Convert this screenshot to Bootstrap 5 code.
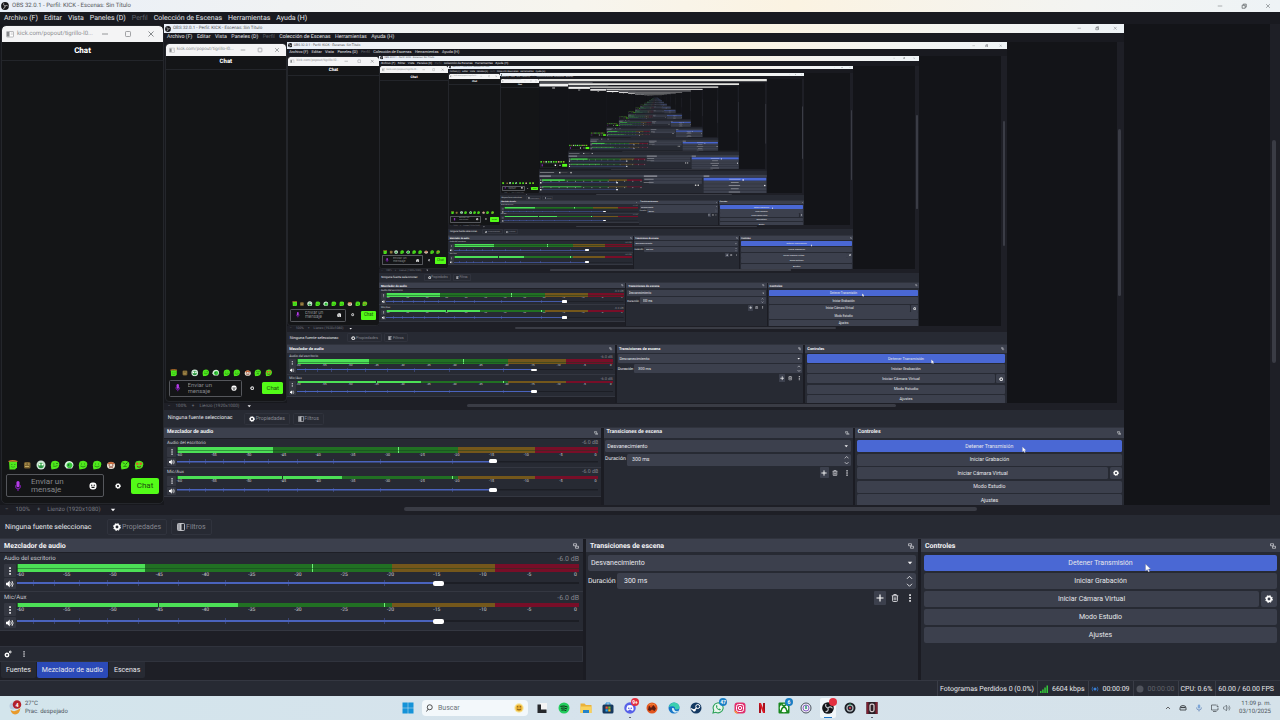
<!DOCTYPE html>
<html lang="es">
<head>
<meta charset="utf-8">
<meta name="viewport" content="width=device-width, initial-scale=1">
<title>OBS 32.0.1 - Perfil: KICK - Escenas: Sin Título</title>
<link rel="stylesheet" href="https://cdn.jsdelivr.net/npm/bootstrap@5.3.0/dist/css/bootstrap.min.css">
<style>
  :root { --s: 1; }
  body { background: #1e1f26; font-family: Roboto, "Open Sans", sans-serif; overflow-x: hidden; }
  /* Every desktop copy has its own scale; --u is one screen unit at that scale */
  .desk {
    --u: calc(1px * var(--s));
    --fs: calc(7 * var(--u));
    font-size: var(--fs); line-height: calc(10 * var(--u)); color: #e8e9ed;
    background: #1e1f26; text-rendering: geometricPrecision; min-width: 0;
  }
  .desk button, .desk input, .desk select, .desk textarea { font: inherit; color: inherit; margin: 0; padding: 0; border: 0; background: none; border-radius: 0; min-width: 0; line-height: inherit; }
  .desk a { color: inherit; text-decoration: none; white-space: nowrap; }
  .desk svg { display: block; flex: none; }
  .i6 { width: calc(6 * var(--u)); height: calc(6 * var(--u)); }
  .i8 { width: calc(8 * var(--u)); height: calc(8 * var(--u)); }
  .i10 { width: calc(10 * var(--u)); height: calc(10 * var(--u)); }

  .titlebar { height: calc(12 * var(--u)); background: linear-gradient(90deg, #e9eff8, #f7f5ee 45%, #fbf3e2 62%, #f3f4f2 85%, #eef3f6); color: #55585c; padding: 0 calc(9 * var(--u)) 0 calc(1 * var(--u)); gap: calc(3 * var(--u)); font-size: calc(6 * var(--u)); white-space: nowrap; overflow: hidden; }
  .winbtns { gap: calc(18 * var(--u)); }
  .menubar { height: calc(12 * var(--u)); background: #191a20; padding: 0 calc(4 * var(--u)); gap: calc(6 * var(--u)); }
  .dim { color: #62646c !important; }

  .preview { aspect-ratio: 1280 / 481; background: #131418; overflow: hidden; min-height: 0; }
  .chatslot { width: 12.8125%; padding: calc(2 * var(--u)) calc(1 * var(--u)) 0 calc(2 * var(--u)); background: #17181d; }
  .mirror { width: 75%; }
  .mirror > svg { width: 100%; }
  .vtrack { width: calc(10 * var(--u)); background: #1e1f26; padding: calc(116 * var(--u)) calc(4 * var(--u)) 0 calc(2 * var(--u)); }
  .vthumb { height: calc(223 * var(--u)); background: #3a3c45; border-radius: calc(2 * var(--u)); }

  .chatwin { height: calc(477 * var(--u)); background: #141517; border-radius: calc(4 * var(--u)); outline: calc(1 * var(--u)) solid #24262b; overflow: hidden; }
  .chatbar { height: calc(16 * var(--u)); background: #f4f4f5; color: #8b8d90; padding: 0 calc(8 * var(--u)) 0 calc(4 * var(--u)); gap: calc(3 * var(--u)); font-size: calc(6 * var(--u)); }
  .chatbtns { width: calc(54 * var(--u)); }
  .chathead { height: calc(19 * var(--u)); font-weight: 800; font-size: calc(8 * var(--u)); color: #fff; border-bottom: calc(1 * var(--u)) solid #23252a; }
  .emotes { gap: calc(4 * var(--u)); padding: 0 calc(6 * var(--u)); margin-bottom: calc(4 * var(--u)); }
  .chatrow { padding: 0 calc(4 * var(--u)) calc(6 * var(--u)); gap: calc(5 * var(--u)); }
  .msgbox { width: calc(98 * var(--u)); height: calc(23 * var(--u)); border: calc(1 * var(--u)) solid #55575c; border-radius: calc(2 * var(--u)); padding: 0 calc(6 * var(--u)); gap: calc(8 * var(--u)); }
  .desk .msgbox textarea { height: calc(16 * var(--u)); font-size: calc(8 * var(--u)); line-height: calc(8 * var(--u)); resize: none; overflow: hidden; width: calc(50 * var(--u)); }
  .msgbox textarea::placeholder { color: #85878b; opacity: 1; }
  .desk .sendbtn { width: calc(28 * var(--u)); height: calc(16 * var(--u)); background: #53fc18; color: #1b4d0d; border-radius: calc(2 * var(--u)); font-size: calc(8 * var(--u)); }

  .zoomrow { height: calc(10 * var(--u)); color: #777a82; font-size: calc(6 * var(--u)); padding-left: calc(5 * var(--u)); gap: calc(7 * var(--u)); }
  .zoomsel { width: calc(56 * var(--u)); }
  .hthumb { position: absolute; left: 31.6%; width: 44.7%; top: calc(2 * var(--u)); height: calc(4 * var(--u)); border-radius: calc(2 * var(--u)); background: #3a3c45; }
  .srcbar { height: calc(24 * var(--u)); background: #272a33; padding: 0 calc(5 * var(--u)); border-bottom: calc(1 * var(--u)) solid #30333d; }
  .srcname { width: calc(82 * var(--u)); white-space: nowrap; margin-right: calc(20 * var(--u)); }
  .desk .srcbtn { height: calc(16 * var(--u)); border: calc(1 * var(--u)) solid #30333d; border-radius: calc(2 * var(--u)); padding: 0 calc(5 * var(--u)); margin-right: calc(4 * var(--u)); gap: calc(1 * var(--u)); color: #858790; }

  .docks { gap: calc(3 * var(--u)); height: calc(141 * var(--u)); background: #1b1c23; }
  .dockcol { min-width: 0; background: #272a33; }
  .d1 { flex: 583 1 0; background: #1e1f26; } .d2 { flex: 332 1 0; } .d3 { flex: 359 1 0; }
  .dockhead { height: calc(13 * var(--u)); margin-bottom: calc(1 * var(--u)); background: #3c404d; font-weight: 700; padding: 0 calc(4 * var(--u)); color: #f3f3f6; }
  .track { height: calc(39 * var(--u)); background: #272a33; border-bottom: calc(1 * var(--u)) solid #343741; padding: calc(1 * var(--u)) calc(4 * var(--u)) 0; }
  .trackname { font-size: calc(6 * var(--u)); line-height: calc(10 * var(--u)); color: #c9cbd1; }
  .db { color: #858790; font-size: calc(7 * var(--u)); }
  .trackicons { width: calc(12 * var(--u)); margin-right: calc(1 * var(--u)); }
  .desk .tbtn { background: #343741; height: calc(13 * var(--u)); border-radius: calc(1 * var(--u)); }
  .desk .tbtn + .tbtn { height: calc(11 * var(--u)); margin-top: calc(1 * var(--u)); }
  .meter { position: relative; height: calc(8 * var(--u)); background: linear-gradient(90deg, #217023 0 66.7%, #74571b 66.7% 85%, #780e28 85%); }
  .meter.thin { height: calc(4 * var(--u)); }
  .lit { height: 100%; background: #4ce056; border-left: calc(1 * var(--u)) solid #217023; }
  .meter:not(.thin)::after { content: ""; position: absolute; left: 0; right: 0; top: 50%; height: calc(1 * var(--u)); background: rgba(20, 60, 30, .45); }
  .peak { position: absolute; top: 0; bottom: 0; width: calc(1 * var(--u)); background: #6cf077; }
  .notch { position: absolute; top: 0; bottom: 0; width: calc(1 * var(--u)); background: #173d1e; }
  .scale { font-size: calc(5 * var(--u)); line-height: calc(6 * var(--u)); color: #d4d5da; }
  .scale span { width: calc(7 * var(--u)); text-align: center; white-space: nowrap; display: block; }
  .fader { position: relative; height: calc(8 * var(--u)); margin-top: calc(1 * var(--u)); }
  .thin ~ .fader { margin-top: calc(4 * var(--u)); }
  .desk .fader input { -webkit-appearance: none; appearance: none; position: relative; display: block; width: 100%; height: calc(8 * var(--u)); background: linear-gradient(90deg, #4a63bd 75%, #1c1e25 75%) center / 100% calc(2 * var(--u)) no-repeat; }
  .fader input::-webkit-slider-thumb { -webkit-appearance: none; width: calc(11 * var(--u)); height: calc(5 * var(--u)); border: 0; border-radius: calc(2 * var(--u)); background: #fff; }
  .fader i { position: absolute; top: calc(1 * var(--u)); bottom: calc(1 * var(--u)); width: calc(1 * var(--u)); background: #3a4370; }
  .mixtools { height: calc(16 * var(--u)); background: #272a33; border: calc(1 * var(--u)) solid #30333d; border-left: 0; padding: 0 calc(4 * var(--u)); gap: calc(9 * var(--u)); margin-top: calc(15 * var(--u)); }
  .tabrow { gap: calc(1 * var(--u)); padding-left: calc(1 * var(--u)); }
  .desk .tabbtn { height: calc(16 * var(--u)); background: #272a33; padding: 0 calc(5 * var(--u)); border-radius: 0 0 calc(2 * var(--u)) calc(2 * var(--u)); }
  .desk .tabbtn.on { background: #2b4ab8; }

  .dockbody { padding: calc(2 * var(--u)) calc(2 * var(--u)); gap: calc(2 * var(--u)); }
  .d3 .dockbody { padding: calc(2 * var(--u)) calc(3 * var(--u)); }
  .pairgap { gap: calc(2 * var(--u)); }
  .field { height: calc(16 * var(--u)); background: #3c404d; border-radius: calc(2 * var(--u)); position: relative; }
  .desk .field select { -webkit-appearance: none; appearance: none; width: 100%; height: 100%; padding-left: calc(3 * var(--u)); }
  .field > svg { position: absolute; right: calc(3 * var(--u)); top: calc(5 * var(--u)); }
  .desk .field input { width: 100%; padding-left: calc(7 * var(--u)); }
  .field > svg.spin { top: 0; width: calc(7 * var(--u)); height: calc(16 * var(--u)); }
  .durlabel { width: calc(29 * var(--u)); }
  .tools { gap: calc(3 * var(--u)); }
  .desk .toolbtn { width: calc(12 * var(--u)); height: calc(14 * var(--u)); border-radius: calc(1 * var(--u)); }
  .desk .toolbtn.on { background: #3c404d; }
  .desk .ctl { height: calc(16 * var(--u)); background: #3c404d; border-radius: calc(2 * var(--u)); position: relative; color: #e6e7eb; }
  .desk .ctl.live { background: #4a68d4; }
  .desk .gearbtn { width: calc(16 * var(--u)); }
  .pointer { position: absolute; left: 62.5%; top: calc(8 * var(--u)); width: calc(6 * var(--u)); height: calc(10 * var(--u)); z-index: 2; }

  .statusbar { height: calc(16 * var(--u)); background: #272a33; border-top: calc(1 * var(--u)) solid #343741; white-space: nowrap; padding-right: calc(3 * var(--u)); }
  .statusbar > div { border-left: calc(1 * var(--u)) solid #3a3d47; padding: 0 calc(3 * var(--u)) 0 calc(2 * var(--u)); gap: calc(4 * var(--u)); height: 100%; }
  .taskbar { position: relative; height: calc(24 * var(--u)); background: linear-gradient(90deg, #d3e5ec, #d6e3ec 40%, #d5e2ea); color: #4d565d; font-size: calc(6 * var(--u)); line-height: calc(8 * var(--u)); padding: 0 calc(9 * var(--u)) 0 calc(9 * var(--u)); }
  .tasks { position: absolute; left: 0; right: 0; top: 0; bottom: 0; gap: calc(6 * var(--u)); pointer-events: none; }
  .tasks > * { pointer-events: auto; }
  .weather { width: 13px; height: 16px; margin-right: 3px; }
  .tray { gap: 8px; }
  .tasks button svg { width: calc(12 * var(--u)); height: calc(12 * var(--u)); margin: auto; }
  .searchbox { width: calc(106 * var(--u)); height: calc(16 * var(--u)); border-radius: calc(4 * var(--u)); background: #f3f8fb; padding: 0 calc(4 * var(--u)); gap: calc(4 * var(--u)); }
  .searchbox input { width: 100%; }
  .desk .searchbox input { font-size: calc(7 * var(--u)); }
  .desk .searchbox input::placeholder { color: #6a7278; opacity: 1; }
  .desk .app { position: relative; width: calc(16 * var(--u)); height: calc(20 * var(--u)); border-radius: calc(2 * var(--u)); }
  .desk .app.on { background: #f2f7fa; }
  .app b { position: absolute; top: 0; right: calc(-1 * var(--u)); width: calc(8 * var(--u)); height: calc(8 * var(--u)); line-height: calc(8 * var(--u)); border-radius: 50%; font-size: calc(5 * var(--u)); color: #fff; text-align: center; }
  .bred { background: #e3303f; } .bblue { background: #1b7fc4; }
  .app.run::after { content: ""; position: absolute; bottom: 0; left: 50%; width: calc(2 * var(--u)); height: calc(1 * var(--u)); margin-left: calc(-1 * var(--u)); background: #667; }
  .app.on::after { content: ""; position: absolute; bottom: 0; left: 25%; width: 50%; height: calc(1 * var(--u)); background: #1f77c8; }
</style>
</head>
<body>
<svg class="d-none" aria-hidden="true">
  <symbol id="i-obs" viewBox="0 0 16 16"><circle cx="8" cy="8" r="7.800" fill="#17171a"/><g fill="none" stroke="#c9c9ce" stroke-width="1.500" stroke-linecap="round"><path d="M5.200 3.200a3.100 3.100 0 0 0 2.300 4.600"/><path d="M5.200 3.200a3.100 3.100 0 0 0 2.300 4.600" transform="rotate(120 8 8)"/><path d="M5.200 3.200a3.100 3.100 0 0 0 2.300 4.600" transform="rotate(240 8 8)"/></g></symbol>
  <symbol id="i-min" viewBox="0 0 8 8"><path d="M1 4h6" stroke="#8b8d90" stroke-width=".9"/></symbol>
  <symbol id="i-max" viewBox="0 0 8 8"><rect x="1.500" y="1.500" width="5" height="5" rx=".8" fill="none" stroke="#8b8d90" stroke-width=".8"/></symbol>
  <symbol id="i-rest" viewBox="0 0 8 8"><path d="M1.500 3h4v4h-4zM3 3V1.500h4v4H5.500" fill="none" stroke="#4f5357" stroke-width=".9"/></symbol>
  <symbol id="i-x" viewBox="0 0 8 8"><path d="M1.500 1.500l5 5m0-5l-5 5" stroke="#6c7074" stroke-width=".8"/></symbol>
  <symbol id="i-pop" viewBox="0 0 16 16"><rect x="1" y="3" width="14" height="11" rx="1" fill="#fff" stroke="#a4a6a9" stroke-width="1.500"/><rect x="2" y="4" width="5" height="9" fill="#86888b"/><path d="M9.500 6h4M9.500 8.500h4" stroke="#a4a6a9"/></symbol>
  <symbol id="i-mic" viewBox="0 0 10 16"><rect x="2.500" y="0" width="5" height="10" rx="2.500" fill="#b43be8"/><path d="M1 7v1.500a4 4 0 0 0 8 0V7M5 12.500V16" fill="none" stroke="#8a1fc0" stroke-width="1.600"/></symbol>
  <symbol id="i-smile" viewBox="0 0 16 16"><rect x="1" y="1" width="14" height="14" rx="6" fill="#fff"/><circle cx="5.500" cy="6.500" r="1.300" fill="#141517"/><circle cx="10.500" cy="6.500" r="1.300" fill="#141517"/><path d="M4 9.500h8c-.6 3.400-7.400 3.400-8 0z" fill="#141517"/></symbol>
  <symbol id="i-gear" viewBox="0 0 16 16"><circle cx="8" cy="8" r="4.600" fill="none" stroke="#fff" stroke-width="3.400"/><circle cx="8" cy="8" r="6.600" fill="none" stroke="#fff" stroke-width="2.200" stroke-dasharray="3 2.180"/></symbol>
  <symbol id="i-filter" viewBox="0 0 16 16"><rect x="1" y="1" width="14" height="14" rx="1.500" fill="none" stroke="#d8d9de" stroke-width="1.600"/><path d="M2 2h6v12H2z" fill="#a2a4ab"/><path d="M8 1v14" stroke="#fff" stroke-width="1.500"/></symbol>
  <symbol id="i-down" viewBox="0 0 12 12"><path d="M1.500 3.500h9L6 8.500z" fill="#f2f2f5"/></symbol>
  <symbol id="i-float" viewBox="0 0 12 12"><path d="M1 1.500h6v4H1zM5 6.500h6v4H5z" fill="none" stroke="#d5d6db" stroke-width="1.400"/></symbol>
  <symbol id="i-dots" viewBox="0 0 16 16"><g fill="#f1f1f4"><rect x="6.400" y="0.500" width="3.400" height="3.400"/><rect x="6.400" y="6.300" width="3.400" height="3.400"/><rect x="6.400" y="12.100" width="3.400" height="3.400"/></g></symbol>
  <symbol id="i-vol" viewBox="0 0 16 16"><path d="M0 5.300h3L7.500 1v14L3 10.700H0z" fill="#fff"/><path d="M9.500 4.500q2.500 3.500 0 7M12 2.200q4.400 5.800 0 11.600" fill="none" stroke="#fff" stroke-width="1.700"/></symbol>
  <symbol id="i-gears" viewBox="0 0 16 16"><circle cx="6" cy="10" r="3.400" fill="none" stroke="#fff" stroke-width="3"/><circle cx="12.500" cy="4" r="1.800" fill="none" stroke="#fff" stroke-width="2"/></symbol>
  <symbol id="i-spin" viewBox="0 0 7 16"><path d="M1 5.800L3.500 3.300 6 5.800M1 10.800l2.500 2.500L6 10.800" fill="none" stroke="#d9dadf" stroke-width="1"/></symbol>
  <symbol id="i-plus" viewBox="0 0 16 16"><path d="M8 1v14M1 8h14" stroke="#fff" stroke-width="2.400"/></symbol>
  <symbol id="i-trash" viewBox="0 0 16 16"><path d="M1.500 3.500h13M5.500 3V1h5v2M3.200 4v9.500q0 1.500 1.500 1.500h6.600q1.500 0 1.500-1.500V4M6.400 6.500v6M9.600 6.500v6" fill="none" stroke="#e9e9ed" stroke-width="1.700"/></symbol>
  <symbol id="i-arrow" viewBox="0 0 12 18"><path d="M1 1v14l3.500-3 2.300 5 2.400-1.100L7 11.200h4.300z" fill="#fff" stroke="#667" stroke-width=".6"/></symbol>
  <symbol id="i-slime" viewBox="0 0 20 20"><path d="M4 3q9-4 14 2 2 9-4 12-4 1-11 2Q0 8 4 3z" fill="#4fe81c"/></symbol>
  <symbol id="e0" viewBox="0 0 20 20"><path d="M2 3h16v12l-4 4H3z" fill="#4fe81c"/><path d="M1 3q8-3 18 0" stroke="#c77a2b" stroke-width="2.500" fill="none"/><path d="M6 9h3m3 0h3M6 13q4 3 8 0" stroke="#2a9a1a" stroke-width="1.500" fill="none"/></symbol>
  <symbol id="e1" viewBox="0 0 20 20"><rect x="4" y="4" width="13" height="13" rx="3" fill="#7b6330"/><path d="M6 8h3m3 0h3M6 13h8" stroke="#c9b26a" stroke-width="1.800"/></symbol>
  <symbol id="e2" viewBox="0 0 20 20"><circle cx="10" cy="10" r="9" fill="#cfe6d6"/><circle cx="10" cy="11" r="5.500" fill="#3aa84b"/><circle cx="7" cy="9" r="2" fill="#fff"/><circle cx="13" cy="9" r="2" fill="#fff"/><path d="M7 14h6" stroke="#163" stroke-width="1.500"/></symbol>
  <symbol id="e3" viewBox="0 0 20 20"><use href="#i-slime"/><path d="M6 8h3m3-1h4M6 12q5 2 9-1" stroke="#1f7d12" stroke-width="1.600" fill="none"/></symbol>
  <symbol id="e4" viewBox="0 0 20 20"><path d="M1 12Q2 2 11 2q8 1 8 9l-3 6H5z" fill="#d7f3dd"/><path d="M5 12q0-7 6-7t6 7l-3 4H8z" fill="#35c83a"/><circle cx="9" cy="10" r="1.500" fill="#133"/></symbol>
  <symbol id="e5" viewBox="0 0 20 20"><use href="#i-slime"/><path d="M7 7v2m6-2v2M5 12q5 4 10 0" stroke="#1f7d12" stroke-width="1.600" fill="none"/></symbol>
  <symbol id="e6" viewBox="0 0 20 20"><ellipse cx="10" cy="11" rx="8" ry="7" fill="#e9e1d2"/><path d="M2 8q8-9 16 0z" fill="#c96a3b"/><path d="M5 10h3m4 0h3M6 14h8" stroke="#7c2a20" stroke-width="2"/></symbol>
  <symbol id="e7" viewBox="0 0 20 20"><use href="#i-slime"/><path d="M6 5l3 3m6-3l-4 4M7 13l3-1 3 1" stroke="#175c0e" stroke-width="1.800" fill="none"/></symbol>
  <symbol id="e8" viewBox="0 0 20 20"><use href="#i-slime"/><circle cx="6.500" cy="7.500" r="2.600" fill="#e4562f"/><circle cx="13.500" cy="7.500" r="2.600" fill="#e4562f"/><path d="M6 13q4 3 8 0" stroke="#7c2a20" stroke-width="2" fill="none"/></symbol>
</svg>

<main class="desk min-vh-100 d-flex flex-column" id="desk">
  <header class="titlebar d-flex align-items-center">
    <svg class="i8"><use href="#i-obs"/></svg>
    <span>OBS 32.0.1 - Perfil: KICK - Escenas: Sin Título</span>
    <div class="winbtns d-flex align-items-center ms-auto">
      <button aria-label="Minimizar"><svg class="i6"><use href="#i-min"/></svg></button>
      <button aria-label="Restaurar"><svg class="i6"><use href="#i-rest"/></svg></button>
      <button aria-label="Cerrar"><svg class="i6"><use href="#i-x"/></svg></button>
    </div>
  </header>
  <nav class="menubar d-flex align-items-center">
    <a href="#">Archivo (F)</a><a href="#">Editar</a><a href="#">Vista</a><a href="#">Paneles (D)</a><a href="#" class="dim">Perfil</a><a href="#">Colección de Escenas</a><a href="#">Herramientas</a><a href="#">Ayuda (H)</a>
  </nav>

  <section class="preview d-flex flex-shrink-0">
    <div class="chatslot flex-shrink-0">
      <div class="chatwin d-flex flex-column">
        <div class="chatbar d-flex align-items-center flex-shrink-0">
          <svg class="i8"><use href="#i-pop"/></svg>
          <span class="text-nowrap">kick.com/popout/tigrillo-l0...</span>
          <div class="chatbtns d-flex flex-shrink-0 ms-auto justify-content-between align-items-center">
            <button aria-label="Minimizar chat"><svg class="i8"><use href="#i-min"/></svg></button>
            <button aria-label="Maximizar chat"><svg class="i8"><use href="#i-max"/></svg></button>
            <button aria-label="Cerrar chat"><svg class="i8"><use href="#i-x"/></svg></button>
          </div>
        </div>
        <div class="chathead d-flex align-items-center justify-content-center flex-shrink-0">Chat</div>
        <div class="emotes d-flex mt-auto">
          <svg class="i10"><use href="#e0"/></svg><svg class="i10"><use href="#e1"/></svg><svg class="i10"><use href="#e2"/></svg><svg class="i10"><use href="#e3"/></svg><svg class="i10"><use href="#e4"/></svg><svg class="i10"><use href="#e5"/></svg><svg class="i10"><use href="#e5"/></svg><svg class="i10"><use href="#e6"/></svg><svg class="i10"><use href="#e7"/></svg><svg class="i10"><use href="#e8"/></svg>
        </div>
        <div class="chatrow d-flex align-items-center justify-content-between">
          <div class="msgbox d-flex align-items-center">
            <svg class="i10"><use href="#i-mic"/></svg>
            <textarea aria-label="Mensaje" placeholder="Enviar un mensaje"></textarea>
            <button aria-label="Emotes"><svg class="i8"><use href="#i-smile"/></svg></button>
          </div>
          <button aria-label="Opciones del chat"><svg class="i6"><use href="#i-gear"/></svg></button>
          <button class="sendbtn">Chat</button>
        </div>
      </div>
    </div>
    <div class="mirror flex-shrink-0"></div>
    <div class="vtrack ms-auto flex-shrink-0"><div class="vthumb"></div></div>
  </section>

  <div class="zoomrow position-relative d-flex align-items-center flex-shrink-0">
    <span>−</span><span>100%</span><span>+</span><span class="zoomsel text-nowrap">Lienzo (1920x1080)</span>
    <svg class="i6"><use href="#i-down"/></svg>
    <div class="hthumb"></div>
  </div>
  <div class="srcbar d-flex align-items-center flex-shrink-0">
    <span class="srcname">Ninguna fuente seleccionac</span>
    <button class="srcbtn d-flex align-items-center"><svg class="i8"><use href="#i-gear"/></svg>Propiedades</button>
    <button class="srcbtn d-flex align-items-center"><svg class="i8"><use href="#i-filter"/></svg>Filtros</button>
  </div>

  <section class="docks d-flex flex-shrink-0">
    <div class="dockcol d1">
      <div class="dockhead d-flex align-items-center justify-content-between">Mezclador de audio<svg class="i6"><use href="#i-float"/></svg></div>
      <div class="track">
        <div class="d-flex justify-content-between trackname"><label for="vol-desk">Audio del escritorio</label><span class="db">-6.0 dB</span></div>
        <div class="d-flex">
          <div class="trackicons d-flex flex-column">
            <button class="tbtn d-flex align-items-center justify-content-center" aria-label="Más"><svg class="i8"><use href="#i-dots"/></svg></button>
            <button class="tbtn d-flex align-items-center justify-content-center" aria-label="Silenciar"><svg class="i8"><use href="#i-vol"/></svg></button>
          </div>
          <div class="flex-fill">
            <div class="meter"><div class="lit" style="width:22.8%"></div><span class="peak" style="left:52.5%"></span></div>
            <div class="scale d-flex justify-content-between"></div>
            <div class="fader"><input type="range" id="vol-desk" min="0" max="200" value="151"></div>
          </div>
        </div>
      </div>
      <div class="track">
        <div class="d-flex justify-content-between trackname"><label for="vol-mic">Mic/Aux</label><span class="db">-6.0 dB</span></div>
        <div class="d-flex">
          <div class="trackicons d-flex flex-column">
            <button class="tbtn d-flex align-items-center justify-content-center" aria-label="Más"><svg class="i8"><use href="#i-dots"/></svg></button>
            <button class="tbtn d-flex align-items-center justify-content-center" aria-label="Silenciar"><svg class="i8"><use href="#i-vol"/></svg></button>
          </div>
          <div class="flex-fill">
            <div class="meter thin"><div class="lit" style="width:39.3%"></div><span class="notch" style="left:25%"></span><span class="peak" style="left:65.3%"></span></div>
            <div class="scale d-flex justify-content-between"></div>
            <div class="fader"><input type="range" id="vol-mic" min="0" max="200" value="151"></div>
          </div>
        </div>
      </div>
      <div class="mixtools d-flex align-items-center" data-root>
        <button aria-label="Propiedades avanzadas"><svg class="i8"><use href="#i-gears"/></svg></button>
        <button aria-label="Menú"><svg class="i6"><use href="#i-dots"/></svg></button>
      </div>
      <div class="tabrow d-flex" data-root>
        <button class="tabbtn">Fuentes</button><button class="tabbtn on">Mezclador de audio</button><button class="tabbtn">Escenas</button>
      </div>
    </div>

    <div class="dockcol d2">
      <div class="dockhead d-flex align-items-center justify-content-between">Transiciones de escena<svg class="i6"><use href="#i-float"/></svg></div>
      <div class="dockbody d-flex flex-column">
        <div class="field"><select aria-label="Transición"><option>Desvanecimiento</option></select><svg class="i6"><use href="#i-down"/></svg></div>
        <div class="d-flex align-items-center">
          <label for="dur" class="durlabel">Duración</label>
          <div class="field flex-fill d-flex"><input id="dur" type="text" value="300 ms"><svg class="spin"><use href="#i-spin"/></svg></div>
        </div>
        <div class="tools d-flex justify-content-end">
          <button class="toolbtn on d-flex align-items-center justify-content-center" aria-label="Agregar"><svg class="i8"><use href="#i-plus"/></svg></button>
          <button class="toolbtn d-flex align-items-center justify-content-center" aria-label="Eliminar"><svg class="i8"><use href="#i-trash"/></svg></button>
          <button class="toolbtn d-flex align-items-center justify-content-center" aria-label="Opciones"><svg class="i8"><use href="#i-dots"/></svg></button>
        </div>
      </div>
    </div>

    <div class="dockcol d3">
      <div class="dockhead d-flex align-items-center justify-content-between">Controles<svg class="i6"><use href="#i-float"/></svg></div>
      <div class="dockbody d-flex flex-column">
        <button class="ctl live">Detener Transmisión<svg class="pointer"><use href="#i-arrow"/></svg></button>
        <button class="ctl">Iniciar Grabación</button>
        <div class="pairgap d-flex">
          <button class="ctl flex-fill">Iniciar Cámara Virtual</button>
          <button class="ctl gearbtn d-flex align-items-center justify-content-center" aria-label="Configurar cámara"><svg class="i8"><use href="#i-gear"/></svg></button>
        </div>
        <button class="ctl">Modo Estudio</button>
        <button class="ctl">Ajustes</button>
      </div>
    </div>
  </section>

  <footer class="statusbar d-flex align-items-center justify-content-end flex-shrink-0" data-root>
    <div class="d-flex align-items-center">Fotogramas Perdidos 0 (0.0%)</div>
    <div class="d-flex align-items-center"><svg class="i8" viewBox="0 0 16 16"><path d="M0 16v-4h3v4zM4.300 16V9h3v7zM8.600 16V5h3v11zM13 16V1h3v15z" fill="#35c83a"/></svg>6604 kbps</div>
    <div class="d-flex align-items-center"><svg class="i8" viewBox="0 0 16 16"><circle cx="8" cy="8" r="3" fill="#3b82d8"/><path d="M3.500 3.500q-3 4.500 0 9M12.500 3.500q3 4.500 0 9" fill="none" stroke="#2f66b0" stroke-width="1.800"/></svg>00:00:09</div>
    <div class="d-flex align-items-center dim"><svg class="i8" viewBox="0 0 16 16"><circle cx="8" cy="8" r="7" fill="#50535c"/></svg>00:00:00</div>
    <div class="d-flex align-items-center">CPU: 0.6%</div>
    <div class="d-flex align-items-center">60.00 / 60.00 FPS</div>
  </footer>

  <footer class="taskbar d-flex align-items-center flex-shrink-0" data-root>
    <svg class="weather" viewBox="0 0 26 32"><circle cx="8" cy="12" r="7" fill="#b9cbe0"/><path d="M3 20q9 6 20-4-2 13-11 13-7-1-9-9z" fill="#e89a2c"/><circle cx="16" cy="9" r="8.500" fill="#b3202b"/><text x="16" y="13" font-size="11" font-weight="700" fill="#fff" text-anchor="middle">4</text></svg>
    <div>27°C<br>Prac. despejado</div>

    <div class="tasks d-flex align-items-center justify-content-center">
      <button class="app" aria-label="Inicio"><svg viewBox="0 0 24 24"><path d="M1 1h10.500v10.500H1zM12.500 1H23v10.500H12.500zM1 12.500h10.500V23H1zM12.500 12.500H23V23H12.500z" fill="#1593d8"/></svg></button>
      <div class="searchbox d-flex align-items-center"><svg class="i8" viewBox="0 0 16 16"><circle cx="7.500" cy="6.500" r="5" fill="none" stroke="#333" stroke-width="1.700"/><path d="M4 10.500L1 15" stroke="#333" stroke-width="1.700"/></svg><input type="search" aria-label="Buscar" placeholder="Buscar"><svg class="i10" viewBox="0 0 20 20"><circle cx="10" cy="10" r="9.500" fill="#f7e7a0"/><circle cx="10" cy="10" r="7" fill="#edb434"/><path d="M7.500 6v3m5-3v3M6 12q4 4 8 0" stroke="#593b10" stroke-width="1.500" fill="none"/></svg></div>
      <button class="app" aria-label="Vista de tareas"><svg viewBox="0 0 24 24"><path d="M8 2h14v14H8z" fill="#f4f4f4"/><path d="M3 5h7v10h11v7H3z" fill="#25272b"/></svg></button>
      <button class="app" aria-label="Spotify"><svg viewBox="0 0 24 24"><circle cx="12" cy="12" r="11" fill="#22cc5c"/><path d="M5.500 8.500q7-2 13 1.300M6.500 12.300q6-1.600 11 1.200M7.500 16q5-1.200 8.500 1" stroke="#0d3018" stroke-width="2" fill="none" stroke-linecap="round"/></svg></button>
      <button class="app" aria-label="Explorador"><svg viewBox="0 0 24 24"><path d="M1 3h8l3 3h11v16H1z" fill="#eab13a"/><path d="M1 9h22v13H1z" fill="#f9d25c"/><path d="M6 16h12v6H6z" fill="#2383c9"/></svg></button>
      <button class="app" aria-label="Tienda"><svg viewBox="0 0 24 24"><path d="M8 6V2h8v4" fill="none" stroke="#2a91d8" stroke-width="2"/><rect x="1" y="5" width="22" height="18" rx="3" fill="#15395f"/><path d="M7 9h4.500v4.500H7z" fill="#ee5a34"/><path d="M12.500 9H17v4.500h-4.500z" fill="#7db928"/><path d="M7 14.500h4.500V19H7z" fill="#2aa5e8"/><path d="M12.500 14.500H17V19h-4.500z" fill="#f7b924"/></svg></button>
      <button class="app run" aria-label="Discord"><svg viewBox="0 0 24 24"><circle cx="12" cy="12" r="11.500" fill="#5661e8"/><path d="M7 7q5-2 10 0 3 5 2 9-2 2-4 1l-1-1.500h-4L9 17q-2 1-4-1-1-4 2-9z" fill="#fff"/><circle cx="9.500" cy="12.500" r="1.600" fill="#5661e8"/><circle cx="14.500" cy="12.500" r="1.600" fill="#5661e8"/></svg><b class="bred">9+</b></button>
      <button class="app" aria-label="Juego"><svg viewBox="0 0 24 24"><circle cx="12" cy="12" r="11" fill="#e2551f"/><path d="M4 16l2-9 4 5 5-6 5 7-3 5-5-3-4 3z" fill="#5a1d12"/><path d="M5 6q6-4 13 0" stroke="#f58a35" stroke-width="2" fill="none"/></svg></button>
      <button class="app" aria-label="Edge"><svg viewBox="0 0 24 24"><circle cx="12" cy="12" r="11" fill="#1676c8"/><path d="M1.500 10Q4 1 13 1q9 1 10 9 0 5-6 5-4 0-3-4-3-4-12.500-1z" fill="#3ccfae"/><path d="M8 12q-1 7 6 9.500 5 0 7-4-8 3-9-5z" fill="#d6edf5"/></svg></button>
      <button class="app" aria-label="Steam"><svg viewBox="0 0 24 24"><circle cx="12" cy="12" r="11" fill="#143a63"/><circle cx="15.500" cy="9" r="4" fill="none" stroke="#fff" stroke-width="2"/><path d="M1.500 13l7 3.500 4.500-4.500" stroke="#fff" stroke-width="2.500" fill="none"/><circle cx="8.500" cy="16.500" r="2.700" fill="#fff"/></svg></button>
      <button class="app" aria-label="WhatsApp"><svg viewBox="0 0 24 24"><path d="M2 22l1.500-5.500a10 10 0 1 1 4 4z" fill="#e9f7ee" stroke="#2fa35c" stroke-width="2.200"/><path d="M8 7q-1 7 8 10l2-2-3-2-1.500 1q-3-1.500-3.500-4l1-1-1-3z" fill="#2fa35c"/></svg><b class="bblue">47</b></button>
      <button class="app" aria-label="Instagram"><svg viewBox="0 0 24 24"><rect x="1" y="1" width="22" height="22" rx="6" fill="#e0306e"/><path d="M1 16l8 7H7q-6 0-6-6z" fill="#f9a13a"/><rect x="5" y="5" width="14" height="14" rx="4" fill="none" stroke="#fff" stroke-width="2"/><circle cx="12" cy="12" r="3.300" fill="none" stroke="#fff" stroke-width="2"/></svg></button>
      <button class="app" aria-label="Netflix"><svg viewBox="0 0 24 24"><path d="M6 2h4v20H6zM14 2h4v20h-4z" fill="#a8101c"/><path d="M6 2h4l8 20h-4z" fill="#e01b26"/></svg></button>
      <button class="app" aria-label="Xbox"><svg viewBox="0 0 24 24"><rect x="1" y="1" width="22" height="22" rx="2" fill="#17871d"/><circle cx="12" cy="12" r="8.500" fill="#fff"/><path d="M6 19q1-7 6-10 5 3 6 10M7 5l5 3 5-3" fill="none" stroke="#17871d" stroke-width="3"/></svg><b class="bblue">6</b></button>
      <button class="app" aria-label="Grabadora"><svg viewBox="0 0 24 24"><circle cx="12" cy="12" r="10" fill="#f1eef5" stroke="#4b5460" stroke-width="2"/><circle cx="12" cy="12" r="6" fill="none" stroke="#8a63c9" stroke-width="2"/><path d="M12 7v7" stroke="#2c9a72" stroke-width="3"/></svg></button>
      <button class="app on" aria-label="OBS"><svg><use href="#i-obs"/></svg><b class="bred"></b></button>
      <button class="app" aria-label="Música"><svg viewBox="0 0 24 24"><circle cx="12" cy="12" r="11" fill="#1c2026"/><circle cx="12" cy="12" r="6" fill="none" stroke="#b0b6ba" stroke-width="2.500"/><circle cx="12" cy="12" r="2.500" fill="#c33c50"/><circle cx="12" cy="5" r="2" fill="#36a06a"/></svg></button>
      <button class="app run" aria-label="Editor"><svg viewBox="0 0 24 24"><rect x="1" y="0" width="22" height="24" fill="#2b2027"/><path d="M1 0h4v24H1zM19 0h4v24h-4z" fill="#7d1f30"/><rect x="8" y="4" width="8" height="15" rx="3" fill="none" stroke="#d9cdd0" stroke-width="2.500"/></svg></button>
    </div>

    <div class="tray d-flex align-items-center ms-auto">
      <svg class="i6" viewBox="0 0 12 12"><path d="M2 8l4-4 4 4" fill="none" stroke="#444" stroke-width="1.600"/></svg>
      <svg class="i8" viewBox="0 0 16 16"><path d="M2 12V8q0-5 6-5t6 5v4z" fill="none" stroke="#3d4246" stroke-width="1.800"/><path d="M3 7h10" stroke="#3d4246" stroke-width="2.500"/></svg>
      <svg class="i8" viewBox="0 0 16 16"><rect x="5.500" y="1" width="5" height="8" rx="2.500" fill="#7da6d8"/><path d="M3 7q0 5 5 5t5-5M8 12v3" fill="none" stroke="#5b7fb4" stroke-width="1.400"/></svg>
      <div class="d-flex gap-1"><svg class="i8" viewBox="0 0 16 16"><path d="M10 2H1v10h13V7M4 15h7M12 1v4h3" fill="none" stroke="#4c5257" stroke-width="1.500"/></svg>
      <svg class="i8" viewBox="0 0 16 16"><path d="M1 6h2l4-4v12l-4-4H1zM9.500 5q2 3 0 6M12 3q4 5 0 10" fill="none" stroke="#5d646a" stroke-width="1.300"/></svg></div>
      <div class="text-end">11:09 p. m.<br>03/10/2025</div>
    </div>
  </footer>
</main>

<script src="https://cdn.jsdelivr.net/npm/bootstrap@5.3.0/dist/js/bootstrap.bundle.min.js"></script>
<script>
  // Decibel labels and fader graduations
  document.querySelectorAll('.scale').forEach(el => {
    for (let db = -60; db <= 0; db += 5) {
      const s = document.createElement('span');
      s.textContent = db;
      el.append(s);
    }
  });
  document.querySelectorAll('.fader').forEach(el => {
    [2.8, 6.6, 11, 16, 21.6, 28.6, 37, 48.3, 65.3].forEach(p => {
      const t = document.createElement('i');
      t.style.left = p + '%';
      el.prepend(t);
    });
  });

  // The captured screen contains itself: each copy is three quarters of the one around it.
  // The first copies are full ones, the smallest are plain shapes.
  const RATIO = 0.75, FULL = 5, TINY = 14;
  const root = document.getElementById('desk');
  const proto = root.cloneNode(true);
  proto.querySelectorAll('[data-root]').forEach(n => n.remove());
  proto.removeAttribute('id');
  proto.classList.remove('min-vh-100');
  proto.querySelectorAll('input[id]').forEach(n => { n.removeAttribute('id'); n.setAttribute('aria-label', 'Vista previa'); });
  proto.querySelectorAll('label').forEach(n => n.removeAttribute('for'));
  proto.inert = true;
  let slot = root.querySelector('.mirror');
  for (let i = 1; i <= FULL; i++) {
    const copy = proto.cloneNode(true);
    copy.style.setProperty('--s', Math.pow(RATIO, i));
    slot.append(copy);
    slot = copy.querySelector('.mirror');
  }

  const r = (x, y, w, h, c) => `<rect x="${x}" y="${y}" width="${w}" height="${h}" fill="${c}"/>`;
  function shapes(depth) {
    let s = r(0, 0, 1280, 641, '#1e1f26') + r(0, 0, 1280, 14, '#e6e6e2') + r(0, 14, 1280, 10, '#191a20') + r(4, 17, 297, 3, '#777980');
    s += r(0, 24, 1270, 481, '#131418') + r(1272, 140, 4, 223, '#3a3c45');
    s += r(2, 26, 161, 16, '#f0f0f0') + r(74, 48, 16, 5, '#ddd');
    for (let i = 0; i < 10; i++) s += r(8 + 14 * i, 461, 9, 9, ['#4fe81c', '#7b6330', '#9fd6a6', '#4fe81c', '#7fdc8c', '#4fe81c', '#4fe81c', '#d9a080', '#4fe81c', '#8fc020'][i]);
    s += r(6, 474, 98, 23, '#303236') + r(8, 476, 94, 19, '#141517') + r(15, 479, 6, 12, '#8f2bc0') + r(88, 481, 8, 8, '#fff') + r(115, 482, 6, 6, '#fff') + r(130, 477, 28, 16, '#53fc18');
    if (depth > 0) s += `<g transform="translate(164 24) scale(${RATIO})">${shapes(depth - 1)}</g>`;
    s += r(0, 505, 1280, 10, '#1e1f26') + r(405, 507, 572, 4, '#3a3c45') + r(0, 515, 1280, 126, '#272a33');
    s += r(5, 524, 80, 4, '#8f9198') + r(113, 522, 8, 8, '#ddd') + r(176, 522, 8, 8, '#bbb') + r(122, 524, 38, 3, '#555');
    s += r(0, 539, 1280, 13, '#3c404d') + r(4, 543, 63, 5, '#b9bac0') + r(589, 543, 75, 5, '#b9bac0') + r(925, 543, 32, 5, '#b9bac0');
    [[564, 8, 128, 583], [604, 4, 221, 622]].forEach(([y, h, lit, f]) => {
      s += r(17, y, 375, h, '#217023') + r(392, y, 103, h, '#74571b') + r(495, y, 84, h, '#780e28') + r(17, y, lit, h, '#4ce056');
      s += r(6, y, 8, 8, '#999') + r(6, f - 4, 8, 8, '#eee') + r(17, f - 1, 421, 2, '#4a63bd') + r(433, f - 3, 11, 6, '#fff');
      for (let i = 0; i < 13; i++) s += r(18 + 46 * i, y + h, 6, 5, '#94959b');
    });
    s += r(588, 555, 327, 16, '#3c404d') + r(617, 573, 298, 16, '#3c404d') + r(592, 561, 52, 4, '#a0a1a8') + r(588, 579, 56, 4, '#8a8b92') + r(876, 593, 8, 8, '#ccc') + r(891, 593, 8, 8, '#ccc');
    s += r(925, 555, 352, 16, '#4a68d4') + r(1068, 561, 64, 4, '#a8b6ec') + r(1144, 563, 6, 9, '#fff');
    [573, 591, 609, 627].forEach((y, i) => { s += r(925, y, 352, 16, '#3c404d') + r(1078 - i % 2 * 12, y + 6, 44 + i % 2 * 20, 4, '#a0a1a8'); });
    return s + r(1265, 595, 7, 7, '#fff');
  }
  slot.innerHTML = `<svg viewBox="0 0 1280 641" aria-hidden="true">${shapes(TINY)}</svg>`;
</script>
</body>
</html>
